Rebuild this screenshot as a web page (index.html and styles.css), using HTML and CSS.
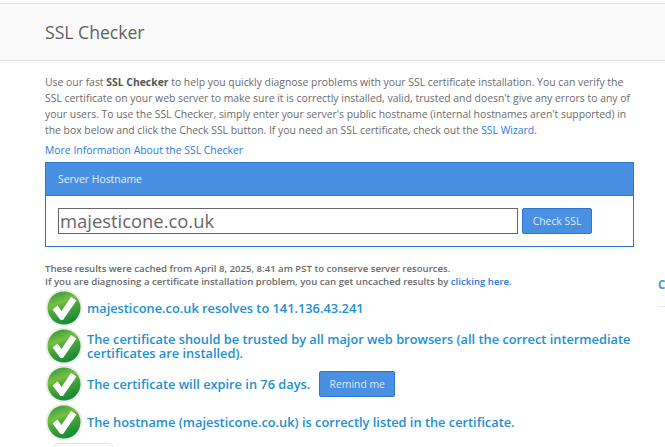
FILE: index.html
```html
<!DOCTYPE html>
<html lang="en">
<head>
<meta charset="utf-8">
<title>SSL Checker</title>
<link rel="stylesheet" href="styles.css">
</head>
<body>
<svg class="defs" width="0" height="0" aria-hidden="true">
  <defs>
    <linearGradient id="g" x1="0" y1="0" x2="0.4" y2="1">
      <stop offset="0" stop-color="#27903a"/>
      <stop offset="0.42" stop-color="#76c043"/>
      <stop offset="0.58" stop-color="#4fa838"/>
      <stop offset="1" stop-color="#1c8c3a"/>
    </linearGradient>
    <symbol id="ok" viewBox="0 0 38 38">
      <circle cx="19" cy="19" r="18.5" fill="#eceeec"/>
      <circle cx="19" cy="19" r="16.5" fill="url(#g)"/>
      <path d="M7.5 20.5 L12.5 16.5 L16.5 22 L26 8 L31.5 11.5 L18 31 L15.5 31 Z" fill="#fff"/>
    </symbol>
  </defs>
</svg>
<header class="top">
  <h1>SSL Checker</h1>
</header>
<main class="content">
  <p class="intro">Use our fast <b>SSL Checker</b> to help you quickly diagnose problems with your SSL certificate installation. You can verify the SSL certificate on your web server to make sure it is correctly installed, valid, trusted and doesn't give any errors to any of your users. To use the SSL Checker, simply enter your server's public hostname (internal hostnames aren't supported) in the box below and click the Check SSL button. If you need an SSL certificate, check out the <a href="#">SSL Wizard</a>.</p>
  <p class="more"><a href="#">More Information About the SSL Checker</a></p>
  <section class="panel">
    <div class="panel-head">Server Hostname</div>
    <div class="panel-body">
      <div class="host">majesticone.co.uk</div>
      <button class="btn btn-check">Check SSL</button>
    </div>
  </section>
  <p class="cached">These results were cached from April 8, 2025, 8:41 am PST to conserve server resources.<br>If you are diagnosing a certificate installation problem, you can get uncached results by <a href="#">clicking here</a>.</p>
  <div class="results">
    <div class="row"><svg class="ok"><use href="#ok"/></svg><div class="msg">majesticone.co.uk resolves to 141.136.43.241</div></div>
    <div class="row"><svg class="ok"><use href="#ok"/></svg><div class="msg">The certificate should be trusted by all major web browsers (all the correct intermediate certificates are installed).</div></div>
    <div class="row"><svg class="ok"><use href="#ok"/></svg><div class="msg">The certificate will expire in 76 days.</div><button class="btn btn-remind">Remind me</button></div>
    <div class="row"><svg class="ok"><use href="#ok"/></svg><div class="msg">The hostname (majesticone.co.uk) is correctly listed in the certificate.</div></div>
  </div>
  <div class="stub"></div>
</main>
<aside class="side"><span class="side-c">C</span></aside>
</body>
</html>
```
FILE: styles.css
```css
html, body { margin: 0; padding: 0; height: 447px; overflow: hidden; background: #fff; }
body { position: relative; font-family: "Open Sans", "Liberation Sans", sans-serif; color: #666; }
a { color: #2a7ae2; text-decoration: none; }
.defs { position: absolute; }

.top { margin-top: 3px; height: 56px; background: #fafafa; border-top: 1px solid #e8e8e8; border-bottom: 1px solid #e6e6e6; display: flex; align-items: center; padding-left: 45px; }
.top h1 { margin: 0; font-size: 17.6px; font-weight: 400; color: #5f5f5f; line-height: 24px; }

.content { width: 589px; margin-left: 45px; }
.intro { margin: 13px 0 0; font-size: 10.4px; line-height: 16px; color: #6b6b6b; width: 589px; }
.intro b { color: #555; font-weight: 700; }
.more { margin: 4px 0 0; font-size: 10.4px; line-height: 16px; }

.panel { margin-top: 4px; border: 1px solid #2a76d2; box-sizing: border-box; height: 85px; }
.panel-head { height: 33px; box-sizing: border-box; background: #4a90e2; border-bottom: 1px solid #2a76d2; color: #e3eefb; font-size: 10.4px; line-height: 33px; padding-left: 12px; }
.panel-body { display: flex; gap: 4px; padding: 12px 12px 0; }
.host { width: 460px; height: 26px; box-sizing: border-box; border: 1px solid #666; font-size: 18.4px; line-height: 24px; padding-left: 1px; color: #666; }
.btn { font-family: inherit; background: #4a90e2; border: 1px solid #2a76d2; border-radius: 2px; color: #dce9fa; font-size: 10.4px; padding: 0; }
.btn-check { width: 70px; height: 26px; }

.cached { margin: 15px 0 0; font-size: 9.6px; line-height: 13px; font-weight: 600; color: #6a6a6a; }
.results { margin-top: 1px; }
.row { display: flex; align-items: center; height: 38px; }
.ok { width: 38px; height: 38px; flex: none; }
.msg { margin-left: 4px; font-size: 12.8px; line-height: 14px; font-weight: 600; color: #2190d0; width: 547px; }
.row:nth-child(3) .msg { width: auto; }
.btn-remind { flex: none; width: 76px; height: 26px; margin-left: 9px; }
.stub { margin: 2px 0 0 7px; width: 60px; height: 12px; border: 1px solid #e4e4e4; border-radius: 6px 6px 0 0; }

.side { position: absolute; left: 658px; top: 278px; width: 20px; height: 28px; border-bottom: 1px solid #e8e8e8; overflow: hidden; }
.side-c { font-size: 11.5px; font-weight: 700; color: #4a90e2; line-height: 14px; display: block; }
```
